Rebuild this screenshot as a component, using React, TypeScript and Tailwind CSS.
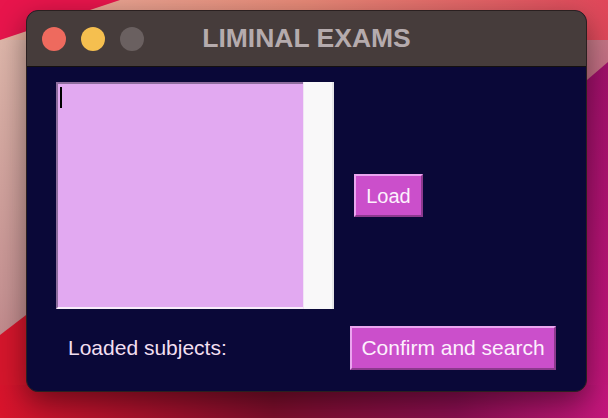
import React from "react";

function Wallpaper() {
  return (
    <svg className="absolute inset-0" width="608" height="418" viewBox="0 0 608 418">
      <defs>
        <linearGradient id="base" x1="0" y1="0" x2="1" y2="1">
          <stop offset="0" stopColor="#e3b4a6" />
          <stop offset="0.45" stopColor="#c98a8a" />
          <stop offset="1" stopColor="#b0126e" />
        </linearGradient>
        <linearGradient id="top" x1="0" y1="0" x2="1" y2="0">
          <stop offset="0" stopColor="#eab2a0" />
          <stop offset="0.5" stopColor="#e88a78" />
          <stop offset="1" stopColor="#e0475a" />
        </linearGradient>
        <linearGradient id="bottom" x1="0" y1="0" x2="1" y2="0">
          <stop offset="0" stopColor="#d8142c" />
          <stop offset="0.45" stopColor="#7e0e2c" />
          <stop offset="0.75" stopColor="#8a0e50" />
          <stop offset="1" stopColor="#c4167c" />
        </linearGradient>
        <linearGradient id="right" x1="0" y1="0" x2="0" y2="1">
          <stop offset="0" stopColor="#a0106a" />
          <stop offset="1" stopColor="#c6167c" />
        </linearGradient>
        <linearGradient id="left" x1="0" y1="0" x2="0" y2="1">
          <stop offset="0" stopColor="#e2bcae" />
          <stop offset="0.7" stopColor="#c89494" />
          <stop offset="1" stopColor="#b87a80" />
        </linearGradient>
      </defs>
      <rect width="608" height="418" fill="url(#base)" />
      <rect x="0" y="0" width="30" height="418" fill="url(#left)" />
      <rect x="0" y="0" width="608" height="40" fill="url(#top)" />
      <polygon points="0,0 120,0 0,40" fill="#e8154c" />
      <polygon points="587,80 608,62 608,418 587,418" fill="url(#right)" />
      <polygon points="0,335 30,312 30,418 0,418" fill="#d6162c" />
      <rect x="0" y="385" width="608" height="33" fill="url(#bottom)" />
    </svg>
  );
}

export default function App() {
  return (
    <div
      className="relative w-[608px] h-[418px] overflow-hidden"
      style={{ fontFamily: '"Liberation Sans", Arial, sans-serif' }}
    >
      <Wallpaper />
      <div className="relative pt-[10px] pl-[26px]">
        <div className="w-[561px] h-[382px] rounded-[12px] overflow-hidden border border-[#2a2020] shadow-[0_10px_30px_rgba(0,0,0,0.45)] flex flex-col bg-[#0a0838]">
          {/* title bar */}
          <div className="h-[56px] shrink-0 bg-[#463c3b] border-b border-[#141010] grid grid-cols-[1fr_auto_1fr] items-center">
            <div className="flex items-center gap-[15px] pl-[15px]">
              <div className="w-[24px] h-[24px] rounded-full bg-[#ee6a5e]" />
              <div className="w-[24px] h-[24px] rounded-full bg-[#f5bf4f]" />
              <div className="w-[24px] h-[24px] rounded-full bg-[#6a6060]" />
            </div>
            <div className="text-[26.5px] font-bold text-[#b5abad] leading-none">LIMINAL EXAMS</div>
            <div />
          </div>
          {/* content */}
          <div className="flex-1 flex flex-col">
            <div className="flex items-center pl-[29px] pt-[15px] gap-[20px]">
              <div className="flex w-[278px] h-[227px]">
                <div className="flex-1 bg-[#e2a9f1] border-t-2 border-l-2 border-[#8e6e9e] border-b-2 border-b-[#f7ecf9] pl-[2px] pt-[3px]">
                  <div className="w-[2px] h-[21px] bg-black" />
                </div>
                <div className="w-[31px] bg-[#f9f8f9] border-l border-[#f1e4f5] border-r-2 border-r-[#e6e6e8]" />
              </div>
              <button className="w-[69px] h-[43px] bg-[#cb4fcb] border-2 border-t-[#eaa6ef] border-l-[#eaa6ef] border-b-[#8c3a8e] border-r-[#8c3a8e] text-[20px] text-[#fdf1fd] flex items-center justify-center">
                Load
              </button>
            </div>
            <div className="flex items-center justify-between pl-[41px] pr-[30px] pt-[17px]">
              <span className="text-[21px] text-[#f2dff0]">Loaded subjects:</span>
              <button className="w-[206px] h-[44px] bg-[#cb4fcb] border-2 border-t-[#eaa6ef] border-l-[#eaa6ef] border-b-[#8c3a8e] border-r-[#8c3a8e] text-[21px] text-[#fdf1fd] flex items-center justify-center">
                Confirm and search
              </button>
            </div>
          </div>
        </div>
      </div>
    </div>
  );
}
